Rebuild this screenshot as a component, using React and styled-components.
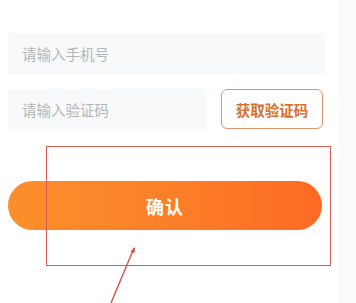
import React from 'react';
import styled, { createGlobalStyle } from 'styled-components';

const Global = createGlobalStyle`
  html, body {
    margin: 0;
    padding: 0;
    background: #ffffff;
  }
  body {
    font-family: "Noto Sans CJK SC", "Noto Sans", sans-serif;
  }
`;

const Page = styled.div`
  position: relative;
  display: flex;
  width: 356px;
  height: 303px;
  overflow: hidden;
`;

const Main = styled.div`
  flex: 0 0 338px;
  display: flex;
  flex-direction: column;
  padding: 33px 0 0 8px;
  box-sizing: border-box;
`;

const Gutter = styled.div`
  flex: 1;
  background: #fbfbfb;
`;

const Row = styled.div`
  display: flex;
  align-items: center;
  gap: 14px;
  margin-bottom: ${(p) => p.$mb || 0}px;
`;

const Field = styled.div`
  width: ${(p) => p.$w}px;
  height: ${(p) => p.$h}px;
  background: #f8f9fb;
  display: flex;
  align-items: center;
  padding-left: 14px;
  box-sizing: border-box;
  color: #b5b5b5;
  font-size: 14.5px;
`;

const CodeButton = styled.div`
  width: 102px;
  height: 40px;
  box-sizing: border-box;
  border: 1.5px solid #e39668;
  border-radius: 6px;
  display: flex;
  align-items: center;
  justify-content: center;
  color: #d6702f;
  font-size: 14.5px;
  font-weight: 700;
`;

const Confirm = styled.div`
  width: 314px;
  height: 49px;
  border-radius: 25px;
  background: linear-gradient(90deg, #fb8f2c 0%, #fc7e28 55%, #fd6a24 100%);
  display: flex;
  align-items: center;
  justify-content: center;
  color: #ffffff;
  font-size: 18px;
  font-weight: 700;
  letter-spacing: 1px;
`;

const Mark = styled.div`
  position: absolute;
  left: 46px;
  top: 146px;
  width: 285px;
  height: 120px;
  box-sizing: border-box;
  border: 1px solid #d85b55;
  pointer-events: none;
`;

const Arrow = styled.svg`
  position: absolute;
  left: 100px;
  top: 240px;
  pointer-events: none;
`;

export default function App() {
  return (
    <>
      <Global />
      <Page>
        <Main>
          <Row $mb={15}>
            <Field $w={317} $h={41}>请输入手机号</Field>
          </Row>
          <Row $mb={52}>
            <Field $w={199} $h={40}>请输入验证码</Field>
            <CodeButton>获取验证码</CodeButton>
          </Row>
          <Confirm>确认</Confirm>
        </Main>
        <Gutter />
        <Mark />
        <Arrow width="50" height="63" viewBox="0 0 50 63">
          <line x1="34" y1="8" x2="11" y2="63" stroke="#d4504c" strokeWidth="1.4" />
          <path d="M35 7 L30.5 11.5 L34.5 13 Z" fill="#d4504c" />
        </Arrow>
      </Page>
    </>
  );
}
